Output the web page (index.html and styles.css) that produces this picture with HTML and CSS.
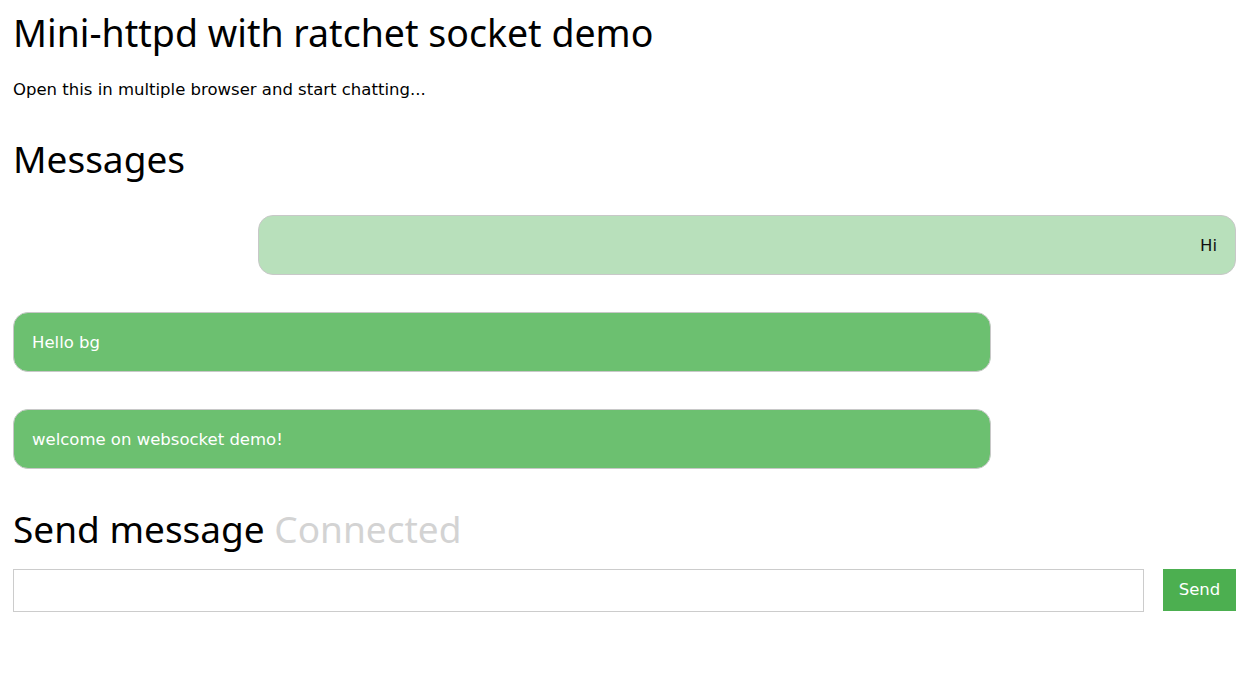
FILE: index.html
```html
<!DOCTYPE html>
<html>
<head>
<meta charset="utf-8">
<title>Mini-httpd with ratchet socket demo</title>
<link rel="stylesheet" href="styles.css">
</head>
<body>
<div class="page">
  <h1 class="title">Mini-httpd with ratchet socket demo</h1>
  <p class="intro">Open this in multiple browser and start chatting...</p>
  <h2 class="section">Messages</h2>
  <div class="messages">
    <div class="bubble own">Hi</div>
    <div class="bubble other">Hello bg</div>
    <div class="bubble other">welcome on websocket demo!</div>
  </div>
  <h2 class="section send-title">Send message <span class="status">Connected</span></h2>
  <form class="composer" onsubmit="return false;">
    <input class="msg-input" type="text">
    <button class="send-btn" type="submit">Send</button>
  </form>
</div>
</body>
</html>
```

FILE: styles.css
```css
html, body {
  margin: 0;
  padding: 0;
  background: #fff;
}
.page {
  padding: 0 11px 0 13px;
  font-family: "DejaVu Sans", sans-serif;
  font-size: 16.5px;
  color: #000;
}
.title {
  font-family: "Noto Sans", "Open Sans", sans-serif;
  font-weight: 400;
  font-size: 37.5px;
  line-height: 1.2;
  margin: 0;
  padding-top: 10px;
}
.intro {
  margin: 25px 0 0;
  line-height: 20px;
}
.section {
  font-family: "Noto Sans", "Open Sans", sans-serif;
  font-weight: 400;
  font-size: 37px;
  line-height: 1.2;
  margin: 37px 0 0;
}
.messages {
  display: flex;
  flex-direction: column;
  gap: 37px;
  margin-top: 34px;
}
.bubble {
  width: 80%;
  box-sizing: border-box;
  height: 60px;
  display: flex;
  align-items: center;
  padding: 0 18px;
  border: 1px solid #c8c8c8;
  border-radius: 15px;
}
.own {
  align-self: flex-end;
  justify-content: flex-end;
  background: #b8e0bb;
  color: #111;
}
.other {
  align-self: flex-start;
  background: #6cc070;
  color: #fff;
}
.send-title {
  margin-top: 38px;
}
.status {
  color: #d3d3d3;
}
.composer {
  display: flex;
  gap: 19px;
  margin-top: 17px;
}
.msg-input {
  flex: 1;
  height: 43px;
  box-sizing: border-box;
  border: 1px solid #cccccc;
  margin: 0;
  padding: 0 10px;
  font: inherit;
}
.send-btn {
  width: 73px;
  height: 42px;
  border: none;
  background: #4caf50;
  color: #fff;
  font: inherit;
  margin: 0;
  padding: 0;
}
```
